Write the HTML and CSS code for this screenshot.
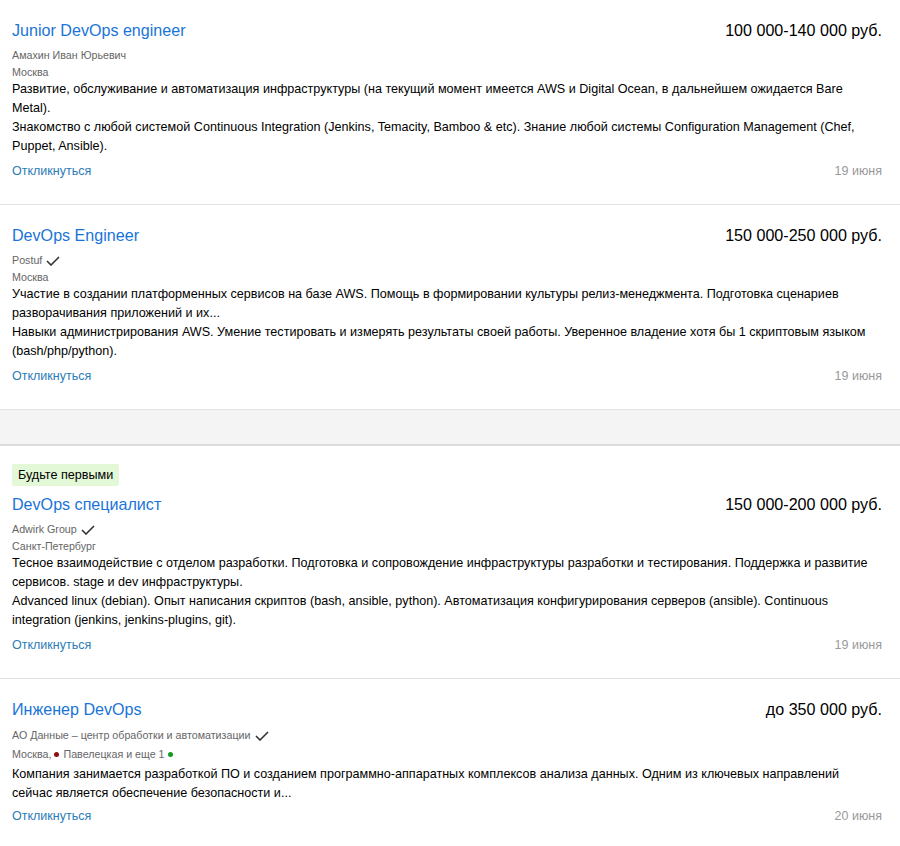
FILE: index.html
```html
<!DOCTYPE html>
<html lang="ru">
<head>
<meta charset="utf-8">
<link rel="stylesheet" href="styles.css">
</head>
<body>
<div class="list">
  <div class="vacancy">
    <div class="head">
      <a class="title" href="#">Junior DevOps engineer</a>
      <div class="salary">100 000-140 000 руб.</div>
    </div>
    <div class="meta">Амахин Иван Юрьевич</div>
    <div class="meta">Москва</div>
    <div class="desc">
      <p>Развитие, обслуживание и автоматизация инфраструктуры (на текущий момент имеется AWS и Digital Ocean, в дальнейшем ожидается Bare Metal).</p>
      <p>Знакомство с любой системой Continuous Integration (Jenkins, Temacity, Bamboo &amp; etc). Знание любой системы Configuration Management (Chef, Puppet, Ansible).</p>
    </div>
    <div class="foot">
      <a class="respond" href="#">Откликнуться</a>
      <span class="date">19 июня</span>
    </div>
  </div>

  <div class="vacancy">
    <div class="head">
      <a class="title" href="#">DevOps Engineer</a>
      <div class="salary">150 000-250 000 руб.</div>
    </div>
    <div class="meta">Postuf <svg class="check" width="14" height="10" viewBox="0 0 14 10"><path d="M1 5 L5 9 L13 1" fill="none" stroke="#333" stroke-width="1.6"/></svg></div>
    <div class="meta">Москва</div>
    <div class="desc">
      <p>Участие в создании платформенных сервисов на базе AWS. Помощь в формировании культуры релиз-менеджмента. Подготовка сценариев разворачивания приложений и их...</p>
      <p>Навыки администрирования AWS. Умение тестировать и измерять результаты своей работы. Уверенное владение хотя бы 1 скриптовым языком (bash/php/python).</p>
    </div>
    <div class="foot">
      <a class="respond" href="#">Откликнуться</a>
      <span class="date">19 июня</span>
    </div>
  </div>

  <div class="band"></div>

  <div class="vacancy after-band">
    <div class="badge">Будьте первыми</div>
    <div class="head">
      <a class="title" href="#">DevOps специалист</a>
      <div class="salary">150 000-200 000 руб.</div>
    </div>
    <div class="meta">Adwirk Group <svg class="check" width="14" height="10" viewBox="0 0 14 10"><path d="M1 5 L5 9 L13 1" fill="none" stroke="#333" stroke-width="1.6"/></svg></div>
    <div class="meta">Санкт-Петербург</div>
    <div class="desc">
      <p>Тесное взаимодействие с отделом разработки. Подготовка и сопровождение инфраструктуры разработки и тестирования. Поддержка и развитие сервисов. stage и dev инфраструктуры.</p>
      <p>Advanced linux (debian). Опыт написания скриптов (bash, ansible, python). Автоматизация конфигурирования серверов (ansible). Continuous integration (jenkins, jenkins-plugins, git).</p>
    </div>
    <div class="foot">
      <a class="respond" href="#">Откликнуться</a>
      <span class="date">19 июня</span>
    </div>
  </div>

  <div class="vacancy last with-metro">
    <div class="head">
      <a class="title" href="#">Инженер DevOps</a>
      <div class="salary">до 350 000 руб.</div>
    </div>
    <div class="meta">АО Данные – центр обработки и автоматизации <svg class="check" width="14" height="10" viewBox="0 0 14 10"><path d="M1 5 L5 9 L13 1" fill="none" stroke="#333" stroke-width="1.6"/></svg></div>
    <div class="meta metro">Москва, <span class="dot dot-red"></span>Павелецкая и еще 1 <span class="dot dot-green"></span></div>
    <div class="desc">
      <p>Компания занимается разработкой ПО и созданием программно-аппаратных комплексов анализа данных. Одним из ключевых направлений сейчас является обеспечение безопасности и...</p>
    </div>
    <div class="foot">
      <a class="respond" href="#">Откликнуться</a>
      <span class="date">20 июня</span>
    </div>
  </div>
</div>
</body>
</html>
```

FILE: styles.css
```css
html, body {
  margin: 0;
  padding: 0;
  background: #fff;
}
body {
  font-family: "Liberation Sans", Arial, sans-serif;
  color: #000;
}
.list {
  width: 900px;
}
.vacancy {
  padding: 19px 18px 23px 12px;
  border-bottom: 1px solid #e3e3e3;
}
.vacancy.after-band {
  padding-top: 18px;
}
.vacancy.last {
  border-bottom: none;
}
.head {
  display: flex;
  justify-content: space-between;
  align-items: baseline;
  line-height: 22px;
  margin-bottom: 6px;
}
.title {
  font-size: 16.1px;
  color: #1a74d8;
  text-decoration: none;
}
.salary {
  font-size: 16.1px;
  color: #000;
}
.meta {
  font-size: 10.7px;
  line-height: 17px;
  color: #666;
  display: flex;
  align-items: center;
}
.check {
  margin-left: 4px;
}
.dot {
  display: inline-block;
  width: 5px;
  height: 5px;
  border-radius: 50%;
  margin: 0 4px 0 3px;
}
.dot-red { background: #8f0f0f; }
.dot-green { background: #119b20; }
.desc {
  font-size: 12.6px;
  line-height: 19px;
  margin-top: -1px;
}
.desc p {
  margin: 0;
}
.foot {
  display: flex;
  justify-content: space-between;
  align-items: baseline;
  margin-top: 5px;
  line-height: 20px;
}
.with-metro .head {
  margin-bottom: 7px;
}
.with-metro .metro {
  margin-top: 2px;
}
.with-metro .desc {
  margin-top: 2px;
}
.with-metro .foot {
  margin-top: 3px;
}
.respond {
  font-size: 12.5px;
  color: #2b7cb8;
  text-decoration: none;
}
.date {
  font-size: 12.5px;
  color: #999;
}
.band {
  height: 34px;
  background: #f4f4f4;
  border-top: 1px solid #e3e3e3;
  border-bottom: 2px solid #dcdcdc;
  margin-top: -1px;
}
.badge {
  display: inline-block;
  background: #e3f8d6;
  font-size: 12.6px;
  line-height: 22px;
  padding: 0 6px;
  border-radius: 2px;
  margin-bottom: 7px;
}
```
